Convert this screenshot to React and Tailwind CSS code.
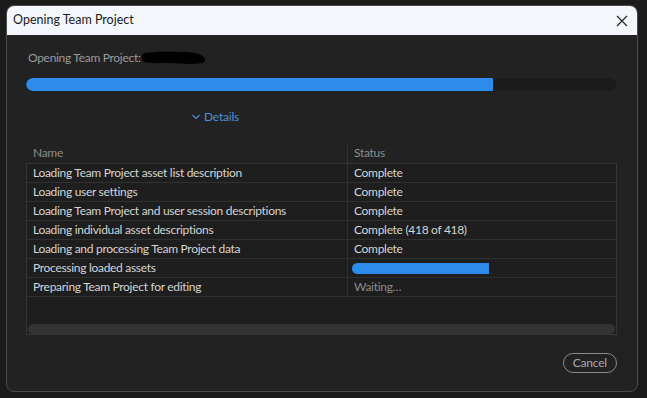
import React from "react";

const rows = [
  ["Loading Team Project asset list description", "Complete"],
  ["Loading user settings", "Complete"],
  ["Loading Team Project and user session descriptions", "Complete"],
  ["Loading individual asset descriptions", "Complete (418 of 418)"],
  ["Loading and processing Team Project data", "Complete"],
  ["Processing loaded assets", "__bar__"],
  ["Preparing Team Project for editing", "Waiting..."],
];

export default function App() {
  return (
    <div className="w-[647px] h-[398px] bg-[#1b1b1b] pl-[6px] pt-[5px] overflow-hidden" style={{ fontFamily: "Lato, 'Noto Sans', sans-serif" }}>
      <div className="w-[632px] h-[387px] rounded-[8px] border border-[#4b4b4b] overflow-hidden flex flex-col bg-[#222222]">
        <div className="h-[29px] bg-[#f3f6fb] flex items-center justify-between pl-[6px] pr-[9px] shrink-0">
          <span className="text-[12.5px] text-[#1a1a1a]">Opening Team Project</span>
          <svg width="12" height="12" viewBox="0 0 12 12" className="text-[#222]">
            <path d="M1 1L11 11M11 1L1 11" stroke="currentColor" strokeWidth="1.1" />
          </svg>
        </div>
        <div className="flex-1 flex flex-col px-[19px]">
          <div className="mt-[15px] h-[16px] flex items-center pl-[2px] text-[12px] text-[#9a9a9a] tracking-[-0.3px]">
            <span>Opening Team Project:</span>
            <svg width="68" height="16" viewBox="0 0 68 16" className="-ml-[1px]">
              <path d="M3 4 C 10 1, 30 2, 45 2 C 58 2, 66 6, 65 11 C 63 15, 45 14, 30 13 C 18 13, 6 14, 3 11 C 1 8, 1 6, 3 4 Z" fill="#000" />
            </svg>
          </div>
          <div className="mt-[12px] h-[13px] rounded-full bg-[#1b1b1b] overflow-hidden w-[590px]">
            <div className="h-full w-[467px] bg-[#2d8ceb] rounded-l-full"></div>
          </div>
          <div className="mt-[17px] flex items-center pl-[165px] text-[#4a90df] text-[12px] tracking-[-0.2px]">
            <svg width="10" height="10" viewBox="0 0 10 10" className="mr-[3px]">
              <path d="M1.5 3L5 6.5L8.5 3" stroke="currentColor" strokeWidth="1.1" fill="none" />
            </svg>
            <span>Details</span>
          </div>
          <div className="mt-[19px] w-[591px]">
            <div className="flex h-[18px] text-[12px] text-[#8c8c8c] tracking-[-0.3px]">
              <div className="w-[321px] pl-[7px] flex items-end pb-[1px]">Name</div>
              <div className="flex-1 border-l border-[#333] pl-[6px] flex items-end pb-[1px]">Status</div>
            </div>
            <div className="border border-[#353535] bg-[#1e1e1e] h-[172px] flex flex-col">
              {rows.map(([name, status], i) => (
                <div key={i} className="flex h-[19px] border-b border-[#303030] text-[12px] text-[#d4d4d4] tracking-[-0.3px] shrink-0">
                  <div className="w-[320px] pl-[6px] flex items-center">{name}</div>
                  <div className={"flex-1 border-l border-[#303030] flex items-center " + (status === "__bar__" ? "pl-[4px]" : "pl-[6px]")}>
                    {status === "__bar__" ? (
                      <div className="h-[11px] w-[137px] bg-[#2d8ceb] rounded-l-full"></div>
                    ) : (
                      <span className={status === "Waiting..." ? "text-[#8c8c8c]" : ""}>{status === "Waiting..." ? "Waiting…" : status}</span>
                    )}
                  </div>
                </div>
              ))}
              <div className="flex-1"></div>
              <div className="h-[10px] mx-[1px] rounded-full bg-[#333333]"></div>
            </div>
          </div>
          <div className="mt-[18px] flex justify-end w-[591px]">
            <button className="h-[20px] px-[9px] rounded-full border border-[#8a8a8a] text-[12px] text-[#a8a8a8] leading-none tracking-[-0.2px]">Cancel</button>
          </div>
        </div>
      </div>
    </div>
  );
}
